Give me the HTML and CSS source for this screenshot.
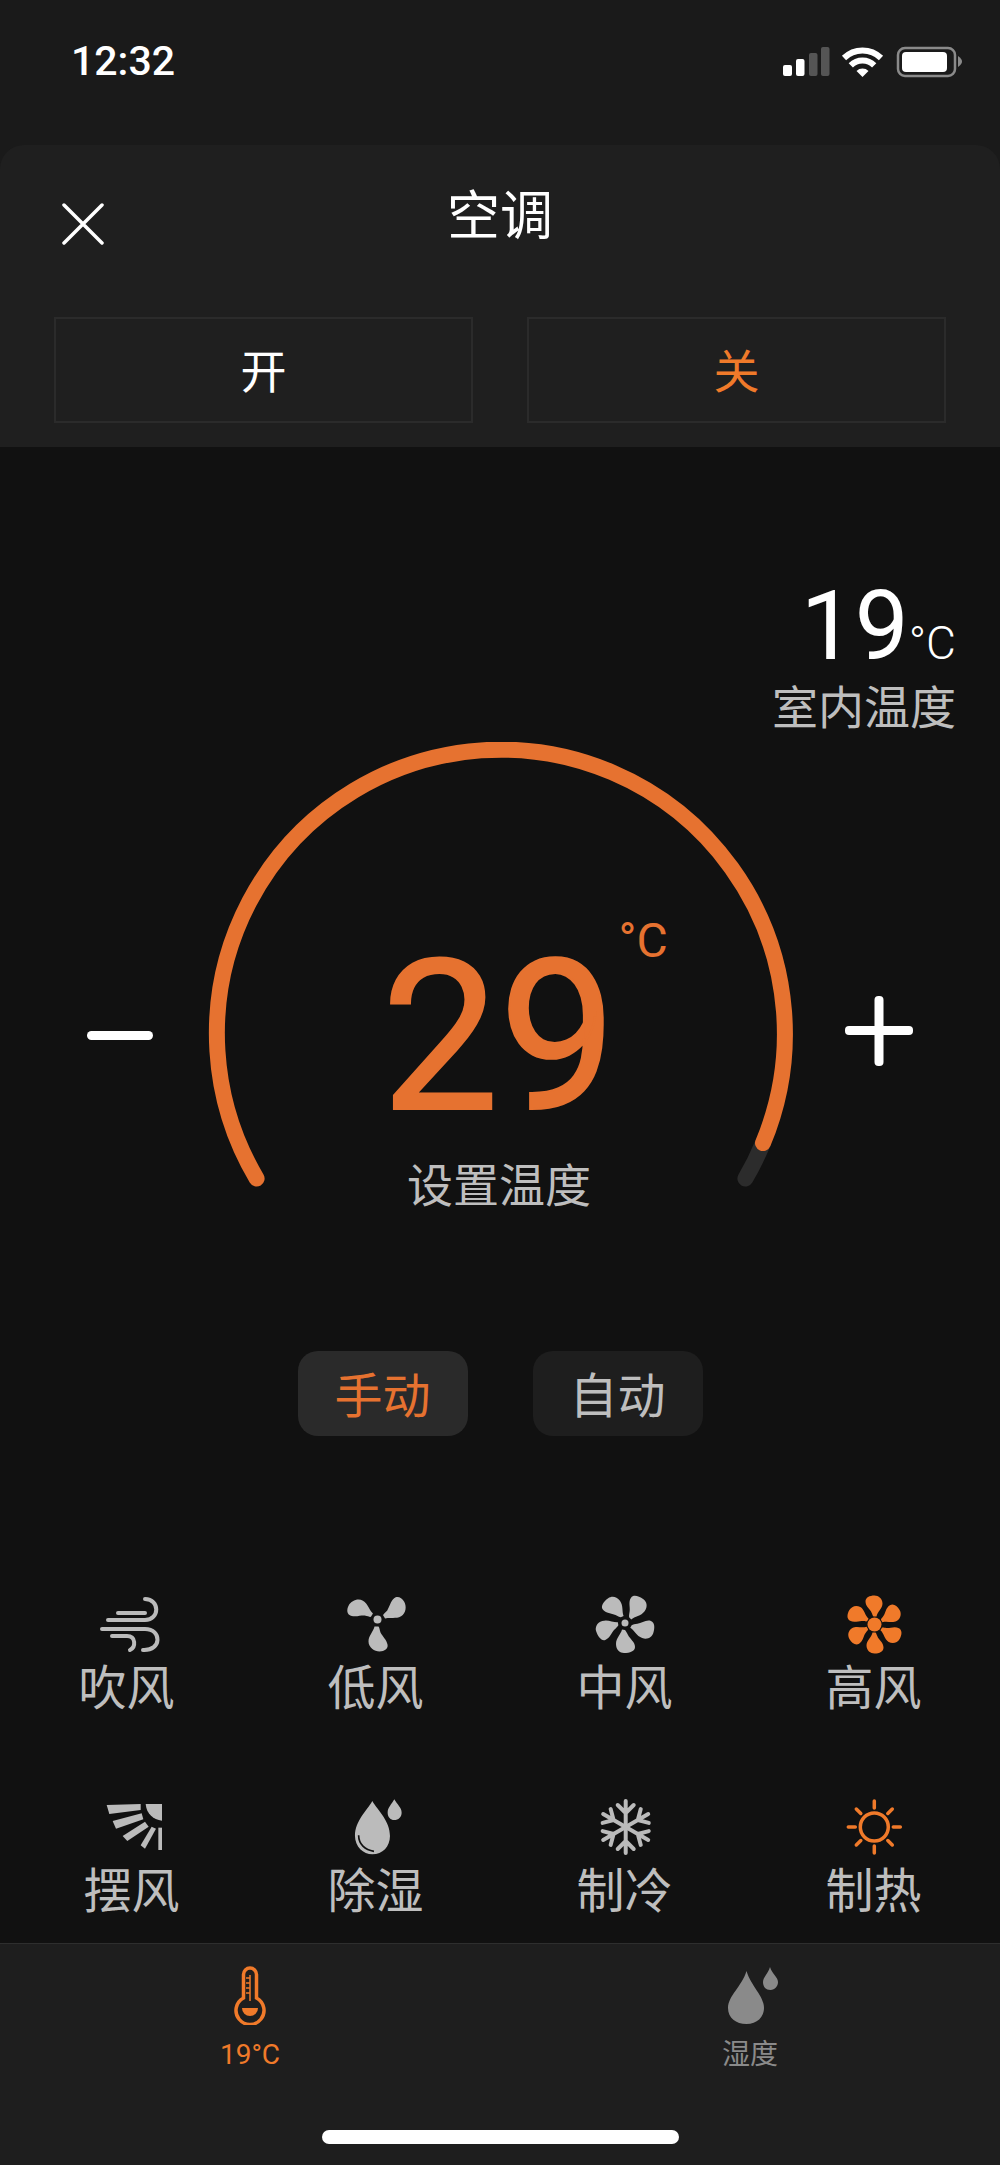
FILE: index.html
```html
<!DOCTYPE html>
<html lang="zh-CN">

<head>
  <meta charset="UTF-8">
  <meta name="viewport" content="width=device-width, initial-scale=1.0">
  <title>空调</title>
  <link rel="stylesheet" href="styles.css">
</head>

<body>
  <div class="app">
    <div class="status-bar">
      <span class="clock">12:32</span>
      <svg class="status-icons" viewBox="783 46 180 32">
        <rect x="783" y="65" width="9" height="11" rx="2" fill="#fff" />
        <rect x="796" y="59" width="8.500" height="17" rx="2" fill="#fff" />
        <rect x="809" y="53" width="8.500" height="23" rx="2" fill="#555" />
        <rect x="821" y="47" width="8.500" height="29" rx="2" fill="#555" />
        <g fill="none" stroke="#fff" stroke-width="6">
          <path d="M844 58A26.500 26.500 0 0 1 881 58" />
          <path d="M850.800 65.300A16.500 16.500 0 0 1 874.200 65.300" />
        </g>
        <path d="M862.500 77L856.500 71A8.500 8.500 0 0 1 868.500 71Z" fill="#fff" />
        <rect x="898" y="48" width="57" height="28" rx="7" fill="none" stroke="#8a8a8a" stroke-width="2.500" />
        <rect x="902" y="52" width="45" height="20" rx="4" fill="#fff" />
        <path d="M958 56C961 58 962 60 962 61.500C962 63 961 65 958 67Z" fill="#8a8a8a" />
      </svg>
    </div>

    <div class="panel">
      <div class="panel-header">
        <svg class="close-icon" viewBox="0 0 42 42">
          <path d="M2 2L40 40M40 2L2 40" stroke="#fff" stroke-width="3.500" stroke-linecap="round" />
        </svg>
        <h1>空调</h1>
      </div>
      <div class="power-row">
        <div class="power-btn">开</div>
        <div class="power-btn orange">关</div>
      </div>
    </div>

    <div class="main">
      <div class="indoor">
        <div class="indoor-value">19<span class="indoor-unit">°C</span></div>
        <div class="indoor-label">室内温度</div>
      </div>

      <div class="gauge">
        <svg class="step-icon minus" viewBox="0 0 66 10">
          <rect width="66" height="9" rx="4.500" fill="#fff" />
        </svg>
        <div class="dial">
          <svg class="dial-arc" viewBox="153 742 692 584">
            <path d="M763 1143A284 284 0 0 1 745.400 1178.500" fill="none" stroke="#2c2c2c" stroke-width="16" stroke-linecap="round" />
            <path d="M256.600 1178.500A284 284 0 1 1 763 1143" fill="none" stroke="#e67230" stroke-width="16" stroke-linecap="round" />
          </svg>
          <div class="set-value">29<span class="set-unit">°C</span></div>
          <div class="set-label">设置温度</div>
        </div>
        <svg class="step-icon plus" viewBox="0 0 68 70">
          <rect y="30" width="68" height="9" rx="4" fill="#fff" />
          <rect x="29.500" width="9" height="70" rx="4" fill="#fff" />
        </svg>
      </div>

      <div class="mode-row">
        <div class="mode-btn active">手动</div>
        <div class="mode-btn">自动</div>
      </div>

      <div class="options">
        <div class="option">
          <svg class="option-icon" viewBox="92 1590 70 66">
            <g fill="none" stroke="#bbb" stroke-width="4" stroke-linecap="round">
              <path d="M108 1619H145C160 1619 160 1598 145 1598" />
              <path d="M118 1612H145" />
              <path d="M102 1628H145C162 1628 162 1650 143 1649" />
              <path d="M112 1635H127C136 1635 136 1646 130 1649" />
            </g>
          </svg>
          <span>吹风</span>
        </div>
        <div class="option">
          <svg class="option-icon" viewBox="341 1590 70 66">
            <defs>
              <path id="blade-low" d="M-3 7C-4 12-9 16-9 22C-9 28-3 32 2 32C7 32 11 29 10 25C9 20 5 17 3 13C2 10 2 8 1 7Z" />
            </defs>
            <g transform="translate(377.500 1618.500)" fill="#bbb">
              <circle r="4" />
              <use href="#blade-low" />
              <use href="#blade-low" transform="rotate(120)" />
              <use href="#blade-low" transform="rotate(240)" />
            </g>
          </svg>
          <span>低风</span>
        </div>
        <div class="option">
          <svg class="option-icon" viewBox="590 1590 70 66">
            <defs>
              <path id="blade-mid" d="M-3 6.500C-4 11-9 15-9 21C-9 27-5 30 -1 30C5 30 10 28 10 24C10 19 5 16 3 12C2 10 1 8 0 7Z" />
            </defs>
            <g transform="translate(625 1622)" fill="#bbb">
              <circle r="3.500" />
              <use href="#blade-mid" />
              <use href="#blade-mid" transform="rotate(72)" />
              <use href="#blade-mid" transform="rotate(144)" />
              <use href="#blade-mid" transform="rotate(216)" />
              <use href="#blade-mid" transform="rotate(288)" />
            </g>
          </svg>
          <span>中风</span>
        </div>
        <div class="option">
          <svg class="option-icon" viewBox="839 1590 70 66">
            <defs>
              <path id="blade-high" d="M-2 8C-3 13-8 16-8 21C-8 26-4 29 0 29C5 29 9 27 9 23C9 18 4 15 3 12C2 10 2 9 1 8Z" />
            </defs>
            <g transform="translate(874.500 1623.500)" fill="#f07a2a">
              <circle r="7" />
              <use href="#blade-high" />
              <use href="#blade-high" transform="rotate(60)" />
              <use href="#blade-high" transform="rotate(120)" />
              <use href="#blade-high" transform="rotate(180)" />
              <use href="#blade-high" transform="rotate(240)" />
              <use href="#blade-high" transform="rotate(300)" />
            </g>
          </svg>
          <span>高风</span>
        </div>
        <div class="option row2">
          <svg class="option-icon" viewBox="92 1793 70 66">
            <g fill="#bbb" transform="translate(90 1785) scale(.3333)">
              <path d="M50 57L152 54V72L58 84Z" />
              <path d="M68 105L155 82L160 100L78 128Z" />
              <path d="M98 150L165 107L176 122L112 165Z" />
              <path d="M152 178L185 122L198 128L165 188Z" />
              <path d="M205 125H218V192H205Z" />
              <path d="M167 54H218V105C190 100 170 85 167 54Z" />
            </g>
          </svg>
          <span class="swing">摆风</span>
        </div>
        <div class="option row2">
          <svg class="option-icon" viewBox="341 1793 70 66">
            <g transform="translate(90 1785) scale(.3333)">
              <path fill="#bbb" d="M847 45C830 75 795 105 795 150C795 182 820 205 847 205C878 205 900 182 900 150C900 105 865 75 847 45Z" />
              <path fill="#bbb" d="M913 40C905 55 893 65 893 80C893 93 902 102 913 102C925 102 935 93 935 80C935 65 921 55 913 40Z" />
              <path fill="none" stroke="#111" stroke-width="5" d="M806 148C806 175 825 192 852 196" />
            </g>
          </svg>
          <span>除湿</span>
        </div>
        <div class="option row2">
          <svg class="option-icon" viewBox="590 1793 70 66">
            <g transform="translate(625.700 1826)" fill="none" stroke="#bbb" stroke-width="4" stroke-linecap="round" stroke-linejoin="round">
              <path d="M0 0V-26M-8 -22L0 -14L8 -22" />
              <path transform="rotate(60)" d="M0 0V-26M-8 -22L0 -14L8 -22" />
              <path transform="rotate(120)" d="M0 0V-26M-8 -22L0 -14L8 -22" />
              <path transform="rotate(180)" d="M0 0V-26M-8 -22L0 -14L8 -22" />
              <path transform="rotate(240)" d="M0 0V-26M-8 -22L0 -14L8 -22" />
              <path transform="rotate(300)" d="M0 0V-26M-8 -22L0 -14L8 -22" />
            </g>
          </svg>
          <span>制冷</span>
        </div>
        <div class="option row2">
          <svg class="option-icon" viewBox="839 1793 70 66">
            <g transform="translate(874.300 1826)" fill="none" stroke="#f07a2a" stroke-width="3.500" stroke-linecap="round">
              <circle r="14" />
              <path d="M0 -19V-26M0 19V26M-19 0H-26M19 0H26M13.500 -13.500L18 -18M-13.500 -13.500L-18 -18M13.500 13.500L18 18M-13.500 13.500L-18 18" />
            </g>
          </svg>
          <span>制热</span>
        </div>
      </div>
    </div>

    <div class="tab-bar">
      <div class="tabs">
        <div class="tab orange">
          <svg class="tab-icon" viewBox="220 1964 60 60">
            <g fill="none" stroke="#f07a2a" stroke-width="3.500">
              <path d="M243.500 1997V1973.500A6.500 6.500 0 0 1 256.500 1973.500V1997A14 14 0 1 1 243.500 1997Z" />
            </g>
            <path d="M242 2007H258A8 8 0 0 1 242 2007Z" fill="#f07a2a" />
            <path d="M250 1974V2000M246 1977H250M246 1982H250M246 1987H250M246 1992H250" stroke="#f07a2a" stroke-width="1.500" fill="none" />
          </svg>
          <span>19°C</span>
        </div>
        <div class="tab gray">
          <svg class="tab-icon" viewBox="720 1964 60 60">
            <path d="M746.500 1970C742 1985 728 1995 728 2007C728 2017 736 2023 746.500 2023C757 2023 764 2016 764 2007C764 1995 751 1985 746.500 1970Z" fill="#8a8a8a" />
            <path d="M770 1966C768 1973 763 1976 763 1981C763 1986 766 1989 770.500 1989C775 1989 778 1985 778 1981C778 1976 772 1973 770 1966Z" fill="#8a8a8a" />
          </svg>
          <span>湿度</span>
        </div>
      </div>
      <div class="home-bar"></div>
    </div>
  </div>
</body>

</html>
```

FILE: styles.css
```css
* {
  box-sizing: border-box;
  margin: 0;
  padding: 0;
  font-family: 'Roboto', 'Noto Sans CJK SC', sans-serif;
}

body {
  background: #1a1a1a;
}

.app {
  width: 1000px;
  height: 2165px;
  display: flex;
  flex-direction: column;
  overflow: hidden;
}

.status-bar {
  height: 145px;
  flex-shrink: 0;
  padding: 38px 37px 0 71px;
  display: flex;
  justify-content: space-between;
  align-items: flex-start;
  background: #1a1a1a;
}

.clock {
  font-size: 41px;
  line-height: 46px;
  font-weight: 500;
  color: #fff;
}

.status-icons {
  width: 180px;
  height: 32px;
  margin-top: 8px;
}

.panel {
  height: 302px;
  flex-shrink: 0;
  background: #1f1f1f;
  border-radius: 24px 24px 0 0;
  padding: 0 54px;
}

.panel-header {
  height: 172px;
  position: relative;
  display: flex;
  justify-content: center;
  padding-top: 38px;
}

.panel-header h1 {
  font-size: 53px;
  line-height: 68px;
  font-weight: 400;
  color: #fff;
}

.close-icon {
  position: absolute;
  left: 8px;
  top: 58px;
  width: 42px;
  height: 42px;
}

.power-row {
  display: flex;
  justify-content: space-between;
}

.power-btn {
  width: 419px;
  height: 106px;
  border: 2px solid #2b2b2b;
  padding-bottom: 4px;
  display: flex;
  justify-content: center;
  align-items: center;
  font-size: 46px;
  color: #fff;
}

.power-btn.orange {
  color: #f07a2a;
}

.main {
  flex: 1;
  min-height: 0;
  background: #111;
  padding-top: 131px;
}

.indoor {
  height: 164px;
  padding-right: 44px;
  text-align: right;
}

.indoor-value {
  font-size: 96px;
  line-height: 96px;
  color: #fff;
}

.indoor-unit {
  font-size: 46px;
  font-weight: 300;
}

.indoor-label {
  margin-top: -13px;
  font-size: 46px;
  line-height: 60px;
  color: #bebebe;
}

.gauge {
  height: 584px;
  padding: 0 87px;
  display: flex;
  align-items: center;
}

.step-icon {
  flex-shrink: 0;
}

.step-icon.minus {
  width: 66px;
  height: 10px;
  margin-top: 4px;
}

.step-icon.plus {
  width: 68px;
  height: 70px;
  margin-top: -6px;
}

.dial {
  flex: 1;
  height: 100%;
  position: relative;
  display: flex;
  flex-direction: column;
  align-items: center;
  padding-top: 181px;
}

.dial-arc {
  position: absolute;
  left: 0;
  top: 0;
  width: 100%;
  height: 100%;
}

.set-value {
  position: relative;
  font-size: 209px;
  line-height: 230px;
  -webkit-text-stroke: 2px #e67230;
  color: #e67230;
}

.set-unit {
  position: absolute;
  left: 100%;
  top: -8px;
  margin-left: 2px;
  font-size: 48px;
  line-height: 52px;
  -webkit-text-stroke: 0;
}

.set-label {
  margin-top: 3px;
  font-size: 46px;
  line-height: 60px;
  color: #bebebe;
}

.mode-row {
  margin-top: 25px;
  display: flex;
  justify-content: center;
  gap: 65px;
}

.mode-btn {
  width: 170px;
  height: 85px;
  border-radius: 20px;
  background: #1e1e1e;
  padding-bottom: 4px;
  display: flex;
  justify-content: center;
  align-items: center;
  font-size: 48px;
  color: #bebebe;
}

.mode-btn.active {
  background: #2a2a2a;
  color: #e67230;
}

.options {
  margin-top: 155px;
  padding-left: 2px;
  display: grid;
  grid-template-columns: repeat(4, 249px);
}

.option {
  height: 203px;
  display: flex;
  flex-direction: column;
  align-items: center;
  font-size: 48px;
  line-height: 60px;
  color: #bebebe;
}

.option.row2 {
  height: auto;
}

.option-icon {
  width: 70px;
  height: 66px;
  margin-bottom: 2px;
}

.swing {
  padding-left: 10px;
}

.tab-bar {
  height: 222px;
  flex-shrink: 0;
  background: #1e1e1e;
  border-top: 1px solid #2e2e2e;
  padding-top: 21px;
  position: relative;
}

.tabs {
  display: flex;
  padding-left: 220px;
  gap: 440px;
}

.tab {
  width: 60px;
  display: flex;
  flex-direction: column;
  align-items: center;
  font-size: 28px;
  line-height: 34px;
}

.tab-icon {
  width: 60px;
  height: 60px;
  margin-bottom: 13px;
}

.tab.orange {
  color: #f07a2a;
}

.tab.gray {
  color: #8a8a8a;
}

.home-bar {
  position: absolute;
  left: 322px;
  bottom: 21px;
  width: 357px;
  height: 14px;
  border-radius: 7px;
  background: #fff;
}
```
